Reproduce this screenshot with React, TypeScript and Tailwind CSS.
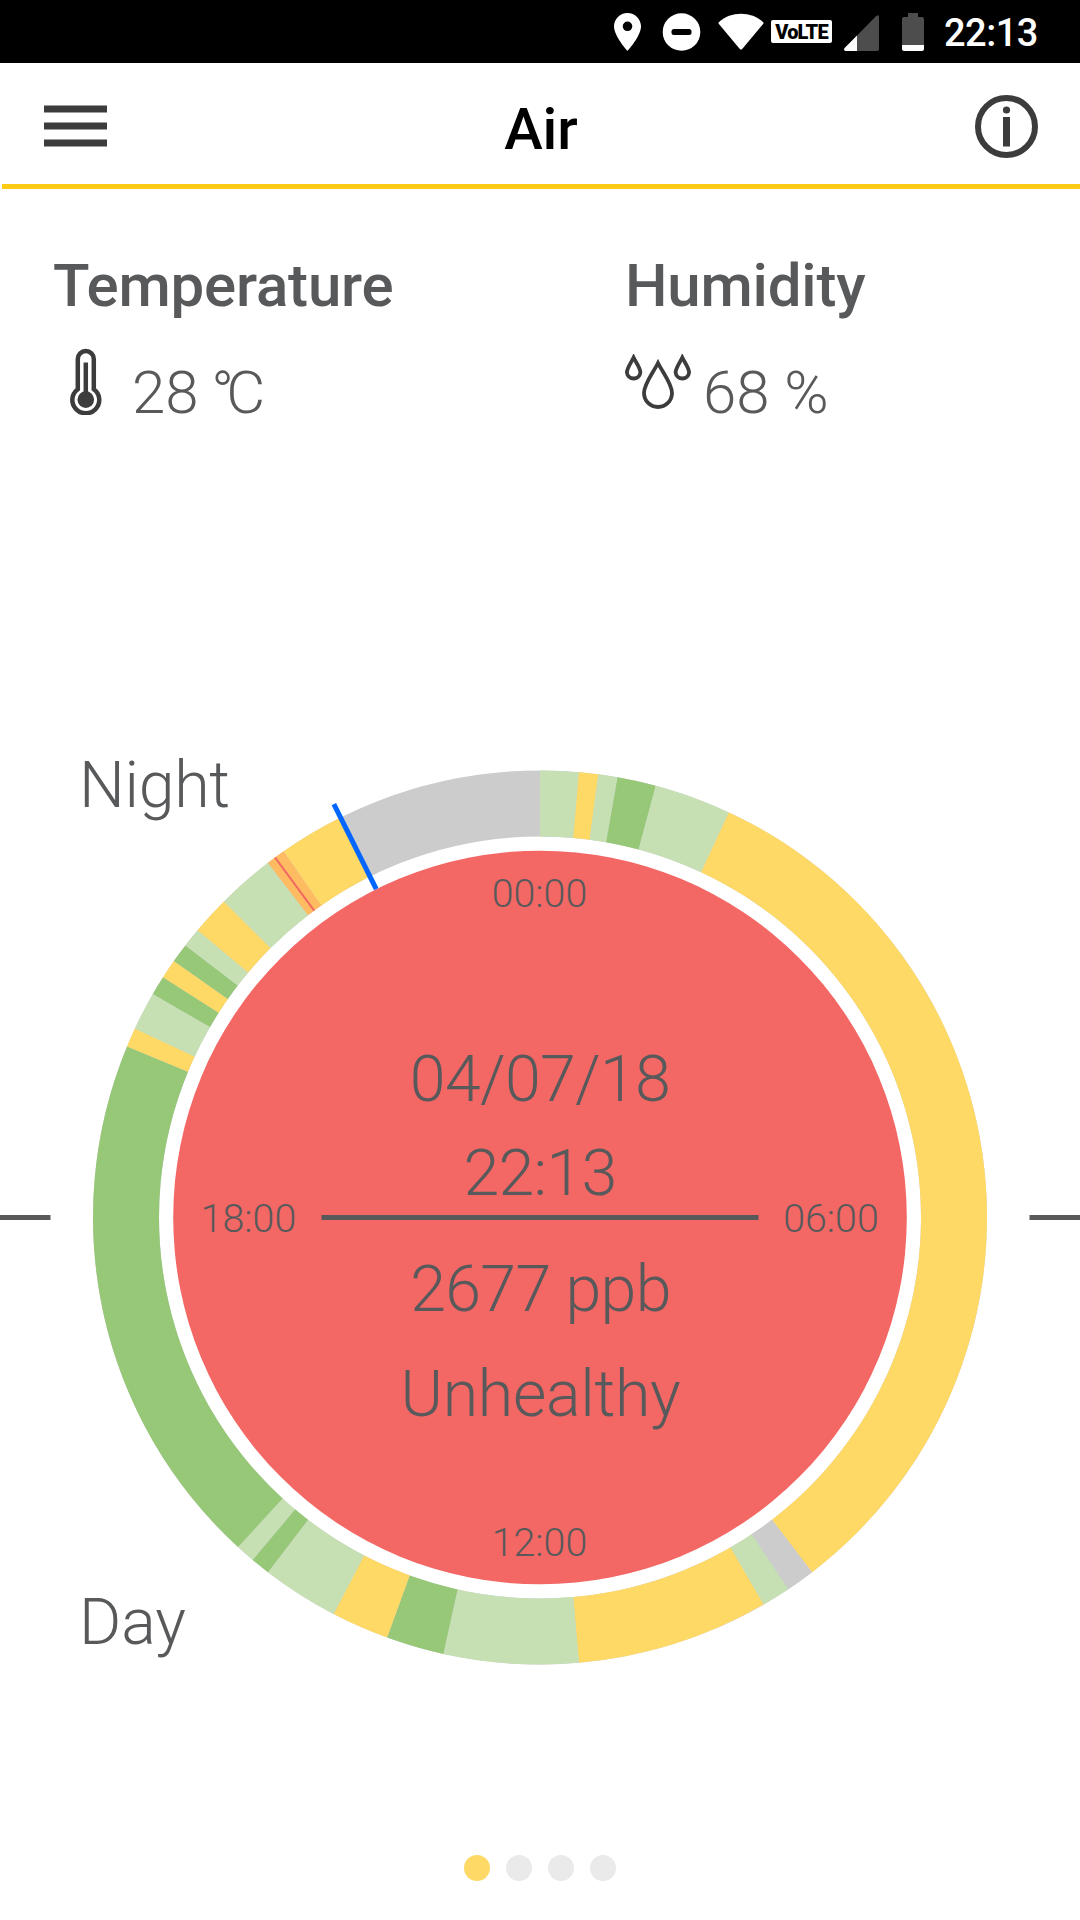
import React from 'react';

type Level = 'good' | 'fair' | 'moderate' | 'poor' | 'none';

interface Segment {
  end: number;
  level: Level;
}

interface ReadingProps {
  title: string;
  value: React.ReactNode;
  icon: React.ReactNode;
}

const COLORS: Record<Level, string> = {
  good: '#96c878',
  fair: '#c6e0b4',
  moderate: '#ffd966',
  poor: '#ffbb61',
  none: '#cccccc',
};

// end angle in degrees, clockwise from midnight
const segments: Segment[] = [
  { end: 5, level: 'fair' },
  { end: 7.5, level: 'moderate' },
  { end: 10, level: 'fair' },
  { end: 15, level: 'good' },
  { end: 25, level: 'fair' },
  { end: 142.5, level: 'moderate' },
  { end: 146.25, level: 'none' },
  { end: 150, level: 'fair' },
  { end: 175, level: 'moderate' },
  { end: 192.5, level: 'fair' },
  { end: 200, level: 'good' },
  { end: 207.5, level: 'moderate' },
  { end: 217.5, level: 'fair' },
  { end: 220, level: 'good' },
  { end: 222.5, level: 'fair' },
  { end: 292.5, level: 'good' },
  { end: 295, level: 'moderate' },
  { end: 300, level: 'fair' },
  { end: 302.5, level: 'good' },
  { end: 305, level: 'moderate' },
  { end: 307.5, level: 'good' },
  { end: 310, level: 'fair' },
  { end: 315, level: 'moderate' },
  { end: 322.5, level: 'fair' },
  { end: 325, level: 'poor' },
  { end: 333.5, level: 'moderate' },
];

const CX = 540;
const CY = 477.5;
const OUTER = 447;
const INNER = 381;

function point(angle: number, r: number) {
  const a = (angle * Math.PI) / 180;
  return [CX + r * Math.sin(a), CY - r * Math.cos(a)];
}

function arcPath(start: number, end: number) {
  const large = end - start > 180 ? 1 : 0;
  const [x1, y1] = point(start, OUTER);
  const [x2, y2] = point(end, OUTER);
  const [x3, y3] = point(end, INNER);
  const [x4, y4] = point(start, INNER);
  return `M${x1} ${y1}A${OUTER} ${OUTER} 0 ${large} 1 ${x2} ${y2}L${x3} ${y3}A${INNER} ${INNER} 0 ${large} 0 ${x4} ${y4}Z`;
}

function Hand({ angle, from, to, color, width }: { angle: number; from: number; to: number; color: string; width: number }) {
  const [x1, y1] = point(angle, from);
  const [x2, y2] = point(angle, to);
  return <line x1={x1} y1={y1} x2={x2} y2={y2} stroke={color} strokeWidth={width} />;
}

function StatusBar() {
  return (
    <div className="flex h-[63px] items-center bg-black pl-[614px] text-white">
      <svg className="h-[38px] w-[27px]" viewBox="0 0 27 38">
        <path
          fill="#fff"
          fillRule="evenodd"
          d="M13.5 0C6 0 0 6 0 13.3 0 23.3 13.5 38 13.5 38S27 23.3 27 13.3C27 6 21 0 13.5 0Zm0 8.5a4.8 4.8 0 1 1 0 9.6 4.8 4.8 0 0 1 0-9.6Z"
        />
      </svg>
      <svg className="ml-[21px] h-[38px] w-[39px]" viewBox="0 0 39 38">
        <circle cx="19.500" cy="19" r="18.800" fill="#fff" />
        <rect x="9.500" y="16" width="20" height="6" rx="2.5" fill="#000" />
      </svg>
      <svg className="ml-[17px] h-[38px] w-[46px]" viewBox="0 0 46 38">
        <path
          fill="#fff"
          d="M.8 9.2C6.8 3.6 15 .8 23 .8s16.200 2.800 22.200 8.400c.5.5.5 1 .1 1.500L24.200 36c-.7.8-1.700.8-2.400 0L.7 10.700c-.4-.5-.4-1 .1-1.500Z"
        />
      </svg>
      <div className="ml-[7px] flex h-[23px] w-[61px] items-center justify-center rounded-[2px] bg-white text-[20px] leading-none font-black tracking-[-0.8px] text-black">
        VoLTE
      </div>
      <svg className="ml-[12px] h-[38px] w-[35px]" viewBox="0 0 35 38">
        <path fill="#4d4d4d" d="M35 4v32q0 2-2 2H13V22.500L32 3.200Q35 1 35 4Z" />
        <path fill="#fff" d="M13 22.500V38H1.500Q-.8 37.500.6 35Z" />
      </svg>
      <svg className="ml-[23px] h-[38px] w-[22px]" viewBox="0 0 22 38">
        <path fill="#4d4d4d" d="M6 0h10v4h4q2 0 2 2v26H0V6q0-2 2-2h4Z" />
        <path fill="#fff" d="M0 32h22v4q0 2-2 2H2q-2 0-2-2Z" />
      </svg>
      <div className="mt-[2px] ml-[20px] text-[38px] leading-none font-medium tracking-[-0.5px]">22:13</div>
    </div>
  );
}

function Header() {
  return (
    <div className="flex h-[121px] items-center justify-between pr-[42px] pl-[44px]">
      <svg className="mt-[5px] h-[42px] w-[63px]" viewBox="0 0 63 42" fill="#3c3c3c">
        <rect y="0.500" width="63" height="7" />
        <rect y="17.500" width="63" height="7" />
        <rect y="34.500" width="63" height="7" />
      </svg>
      <h1 className="mt-[10px] text-[58px] leading-none font-medium text-black">Air</h1>
      <svg className="mt-[6px] h-[63px] w-[63px]" viewBox="0 0 63 63">
        <circle cx="31.500" cy="31.500" r="28.500" fill="none" stroke="#3c3c3c" strokeWidth="6" />
        <circle cx="31.500" cy="15" r="3.600" fill="#3c3c3c" />
        <rect x="28" y="22" width="7" height="29.500" fill="#3c3c3c" />
      </svg>
    </div>
  );
}

function ThermometerIcon() {
  return (
    <svg className="mt-[-16px] ml-px h-[68px] w-[66px]" viewBox="0 0 66 68" fill="none" stroke="#3c3c3c">
      <path strokeWidth="4.500" d="M23.800 42.200V12a8 8 0 0 1 16 0v30.200q5.500 4.200 5.500 10.600a13.500 13.500 0 0 1-27 0q0-6.400 5.500-10.600Z" />
      <path strokeWidth="4.500" d="M31.800 15.500V48" />
      <circle cx="31.800" cy="52.600" r="8.300" fill="#3c3c3c" stroke="none" />
    </svg>
  );
}

function DropsIcon() {
  return (
    <svg className="mt-[-9px] h-[55px] w-[66px]" viewBox="0 0 66 55" fill="none" stroke="#3c3c3c">
      <path strokeWidth="3.800" d="M33 9C28 19 19 30 19 39a14 14 0 0 0 28 0C47 30 38 19 33 9Z" />
      <path strokeWidth="3.800" d="M8.600 3.500C6 9 1.900 14 1.900 18.500a6.800 6.800 0 0 0 13.500 0C15.400 14 11.300 9 8.600 3.500Z" />
      <path strokeWidth="3.800" d="M57.300 3.500C54.700 9 50.600 14 50.600 18.500a6.800 6.800 0 0 0 13.500 0C64.100 14 60 9 57.300 3.500Z" />
    </svg>
  );
}

function Reading({ title, value, icon }: ReadingProps) {
  return (
    <div>
      <h2 className="text-[60px] leading-none font-medium tracking-[-0.2px]">{title}</h2>
      <div className="mt-[47px] flex h-[60px] items-start">
        {icon}
        <span className="ml-[12px] text-[60px] leading-none font-light">{value}</span>
      </div>
    </div>
  );
}

function DayDial() {
  return (
    <div className="relative mt-[317px] h-[955px] text-[64.5px] leading-none font-light tracking-[-0.3px]">
      <svg className="h-[955px] w-[1080px]" viewBox="0 0 1080 955">
        <circle cx={CX} cy={CY} r={(OUTER + INNER) / 2} fill="none" stroke={COLORS.none} strokeWidth={OUTER - INNER} />
        {segments.map((segment, index) => (
          <path
            key={segment.end}
            d={arcPath(index === 0 ? 0 : segments[index - 1].end, segment.end)}
            fill={COLORS[segment.level]}
          />
        ))}
        <Hand angle={323.65} from={INNER} to={OUTER} color="#f26663" width={2} />
        <circle cx={CX} cy={CY} r={366.8} fill="#f36764" />
        <Hand angle={333.5} from={367} to={462} color="#0066ff" width={5} />
        <g stroke="#58595b" strokeWidth="5">
          <line x1="0" y1={CY} x2="50.500" y2={CY} />
          <line x1="321.500" y1={CY} x2="758.500" y2={CY} />
          <line x1="1029.500" y1={CY} x2="1080" y2={CY} />
        </g>
        <g className="tracking-normal" fill="#58595b" fontSize="39.300" textAnchor="middle">
          <text x="539.500" y="166.500">00:00</text>
          <text x="831" y="491.500">06:00</text>
          <text x="539.500" y="815.500">12:00</text>
          <text x="248.500" y="491.500">18:00</text>
        </g>
      </svg>
      <div className="absolute top-[13px] left-[79px]">Night</div>
      <div className="absolute top-[850px] left-[79px] tracking-normal">Day</div>
      <div className="absolute inset-x-0 top-[307px] flex flex-col items-center">
        <div className="tracking-[-0.7px]">04/07/18</div>
        <div className="mt-[29px] tracking-[-0.7px]">22:13</div>
        <div className="mt-[52px] ml-px tracking-[-0.7px]">2677 ppb</div>
        <div className="mt-[40px] ml-px tracking-[-0.3px]">Unhealthy</div>
      </div>
    </div>
  );
}

function PageDots() {
  return (
    <div className="mt-[160px] flex justify-center gap-4">
      <div className="h-[26px] w-[26px] rounded-full bg-[#ffd966]" />
      <div className="h-[26px] w-[26px] rounded-full bg-[#eaeaea]" />
      <div className="h-[26px] w-[26px] rounded-full bg-[#eaeaea]" />
      <div className="h-[26px] w-[26px] rounded-full bg-[#eaeaea]" />
    </div>
  );
}

export default function App() {
  return (
    <div className="h-[1920px] w-[1080px] overflow-hidden bg-white font-['Roboto',sans-serif] text-[#58595b]">
      <StatusBar />
      <Header />
      <div className="ml-[2px] h-[5px] bg-[#ffcb17]" />
      <div className="mt-[67px] grid grid-cols-[572px_1fr] pl-[53px]">
        <Reading
          title="Temperature"
          value={<>28<span className="ml-[-2px] tracking-[-7.500px]"><span className="tracking-normal"> </span>°C</span></>}
          icon={<ThermometerIcon />}
        />
        <Reading title="Humidity" value="68 %" icon={<DropsIcon />} />
      </div>
      <DayDial />
      <PageDots />
    </div>
  );
}
